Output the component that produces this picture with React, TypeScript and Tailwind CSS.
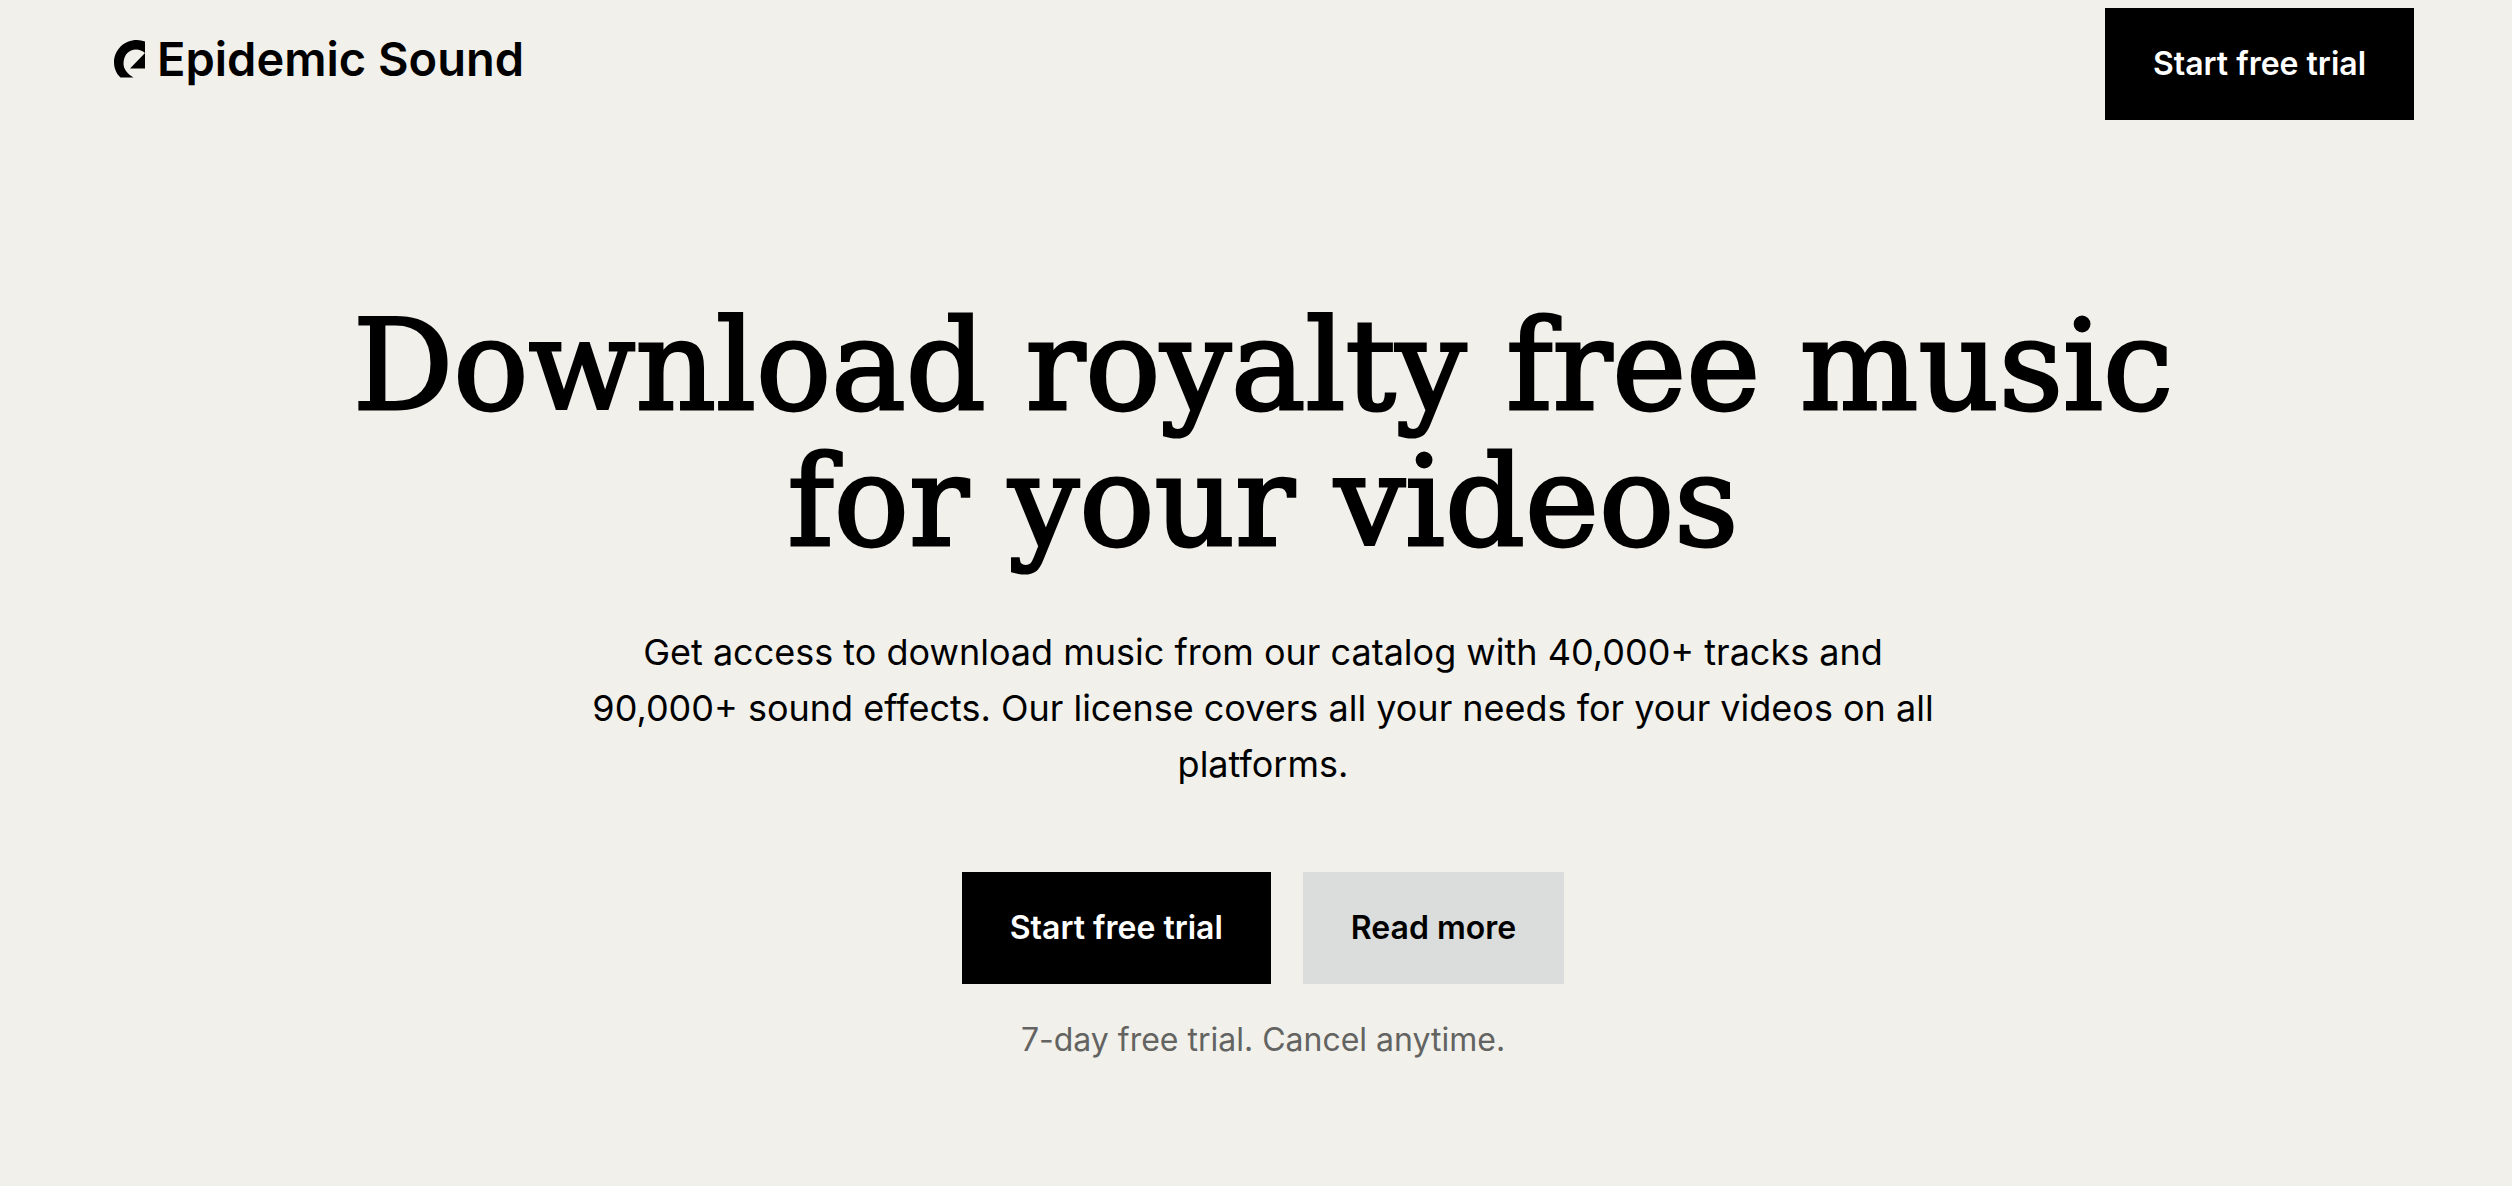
const TRIAL_URL = '#start-trial'

const BUTTON_VARIANTS = {
  primary: 'bg-black text-white hover:bg-neutral-800',
  secondary: 'bg-[#dbdddc] text-black hover:bg-[#cfd1d0]',
}

interface ButtonLinkProps {
  href: string
  variant?: keyof typeof BUTTON_VARIANTS
  children: React.ReactNode
}

export default function App() {
  return (
    <div className="min-h-screen bg-[#f1f0eb] pr-[98px] pl-28 font-['Inter',sans-serif] text-black">
      <header className="flex items-start justify-between pt-2">
        <Logo />
        <ButtonLink href={TRIAL_URL}>Start free trial</ButtonLink>
      </header>

      <main className="flex flex-col items-center pt-[178px] pb-28 text-center">
        <h1 className="font-['DejaVu_Serif',serif] text-[125px] leading-[136px] [-webkit-text-stroke:3px_black]">
          Download royalty free music
          <br />
          for your videos
        </h1>
        <p className="mt-[54px] max-w-[1376px] text-[36px] leading-[56px]">
          Get access to download music from our catalog with 40,000+ tracks and
          90,000+ sound effects. Our license covers all your needs for your
          videos on all platforms.
        </p>
        <div className="mt-20 flex gap-8">
          <ButtonLink href={TRIAL_URL}>Start free trial</ButtonLink>
          <ButtonLink href="#read-more" variant="secondary">
            Read more
          </ButtonLink>
        </div>
        <p className="mt-8 text-[32px] leading-[48px] text-[#636361]">
          7-day free trial. Cancel anytime.
        </p>
      </main>
    </div>
  )
}

function Logo() {
  return (
    <a href="#home" className="flex items-center gap-3 pt-5 pl-0.5">
      <svg viewBox="0 0 31 38" className="h-[38px] w-[31px]" aria-hidden="true">
        <path d="M31 1.5A24 24 0 0 0 23 0C10 0 0 10 0 22.500C0 28 2.500 34 6.500 37.500H19.500C13 33.500 9.500 29 9.500 23.500C9.500 15 15 9.500 22 9.500C25.500 9.500 28.500 10.700 31 13Z" />
        <path d="M31 13V28.500H16Z" />
      </svg>
      <span className="text-[47px] leading-[62px] font-semibold">
        Epidemic Sound
      </span>
    </a>
  )
}

function ButtonLink({ href, variant = 'primary', children }: ButtonLinkProps) {
  return (
    <a
      href={href}
      className={`flex h-28 items-center px-12 text-[32px] leading-[48px] font-semibold ${BUTTON_VARIANTS[variant]}`}
    >
      {children}
    </a>
  )
}
